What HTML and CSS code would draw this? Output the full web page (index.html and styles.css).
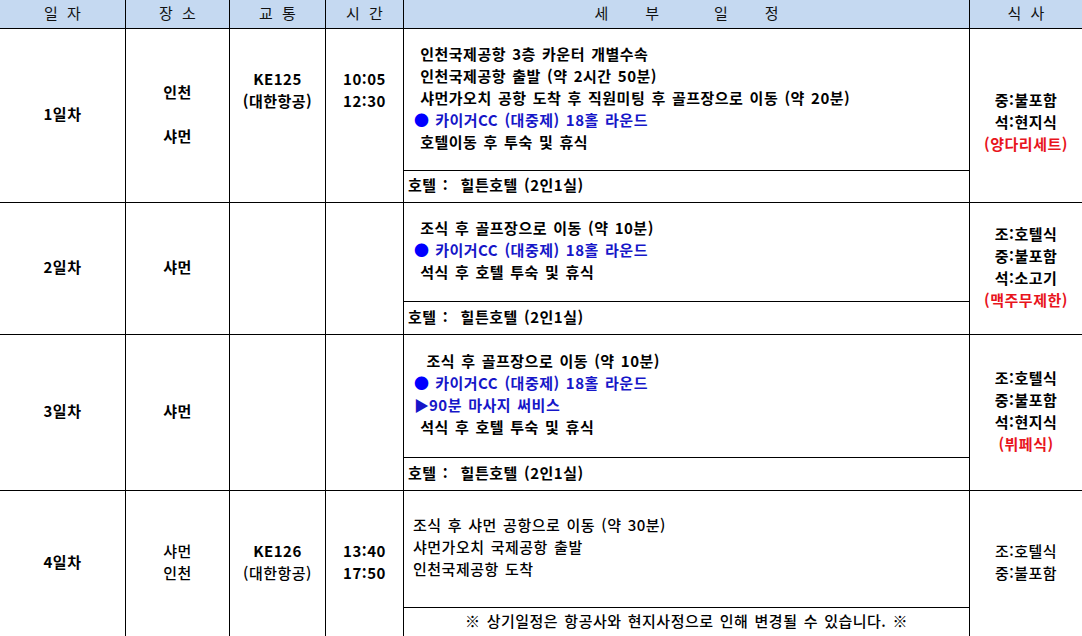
FILE: index.html
```html
<!DOCTYPE html>
<html lang="ko">
<head>
<meta charset="utf-8">
<title>일정표</title>
<link rel="stylesheet" href="styles.css">
</head>
<body>
<div class="sheet">
  <div class="cell hd">일 자</div>
  <div class="cell hd">장 소</div>
  <div class="cell hd">교 통</div>
  <div class="cell hd">시 간</div>
  <div class="cell hd hd-spread"><span>세</span><span class="g1">부</span><span class="g2">일</span><span class="g1">정</span></div>
  <div class="cell hd last">식 사</div>

  <!-- 1일차 -->
  <div class="cell b">1일차</div>
  <div class="cell b"><div>인천</div><div>&nbsp;</div><div>샤먼</div></div>
  <div class="cell b top"><div>KE125</div><div>(대한항공)</div></div>
  <div class="cell b top"><div>10:05</div><div>12:30</div></div>
  <div class="cell detail-cell">
    <div class="detail b">
      <div class="ln"> 인천국제공항 3층 카운터 개별수속</div>
      <div class="ln"> 인천국제공항 출발 (약 2시간 50분)</div>
      <div class="ln"> 샤먼가오치 공항 도착 후 직원미팅 후 골프장으로 이동 (약 20분)</div>
      <div class="ln blue"><span class="dot">●</span> 카이거CC (대중제) 18홀 라운드</div>
      <div class="ln"> 호텔이동 후 투숙 및 휴식</div>
    </div>
    <div class="hotel b r1">호텔 :  힐튼호텔 (2인1실)</div>
  </div>
  <div class="cell b last meal1"><div>중:불포함</div><div>석:현지식</div><div class="red">(양다리세트)</div></div>

  <!-- 2일차 -->
  <div class="cell b">2일차</div>
  <div class="cell b">샤먼</div>
  <div class="cell"></div>
  <div class="cell"></div>
  <div class="cell detail-cell">
    <div class="detail b">
      <div class="ln"> 조식 후 골프장으로 이동 (약 10분)</div>
      <div class="ln blue"><span class="dot">●</span> 카이거CC (대중제) 18홀 라운드</div>
      <div class="ln"> 석식 후 호텔 투숙 및 휴식</div>
    </div>
    <div class="hotel b">호텔 :  힐튼호텔 (2인1실)</div>
  </div>
  <div class="cell b last"><div>조:호텔식</div><div>중:불포함</div><div>석:소고기</div><div class="red">(맥주무제한)</div></div>

  <!-- 3일차 -->
  <div class="cell b">3일차</div>
  <div class="cell b">샤먼</div>
  <div class="cell"></div>
  <div class="cell"></div>
  <div class="cell detail-cell">
    <div class="detail b">
      <div class="ln">  조식 후 골프장으로 이동 (약 10분)</div>
      <div class="ln blue"><span class="dot">●</span> 카이거CC (대중제) 18홀 라운드</div>
      <div class="ln blue"><span class="tri">▶</span>90분 마사지 써비스</div>
      <div class="ln"> 석식 후 호텔 투숙 및 휴식</div>
    </div>
    <div class="hotel b">호텔 :  힐튼호텔 (2인1실)</div>
  </div>
  <div class="cell b last"><div>조:호텔식</div><div>중:불포함</div><div>석:현지식</div><div class="red">(뷔페식)</div></div>

  <!-- 4일차 -->
  <div class="cell b">4일차</div>
  <div class="cell m"><div>샤먼</div><div>인천</div></div>
  <div class="cell m"><div class="b">KE126</div><div>(대한항공)</div></div>
  <div class="cell b"><div>13:40</div><div>17:50</div></div>
  <div class="cell detail-cell">
    <div class="detail d4 m">
      <div class="ln">조식 후 샤먼 공항으로 이동 (약 30분)</div>
      <div class="ln">샤먼가오치 국제공항 출발</div>
      <div class="ln">인천국제공항 도착</div>
    </div>
    <div class="note m">※ 상기일정은 항공사와 현지사정으로 인해 변경될 수 있습니다. ※</div>
  </div>
  <div class="cell last m"><div>조:호텔식</div><div>중:불포함</div></div>
</div>
</body>
</html>
```

FILE: styles.css
```css
* { box-sizing: border-box; }

html, body {
  margin: 0;
  padding: 0;
  background: #fff;
  overflow: hidden;
}

body {
  width: 1082px;
  height: 636px;
  font-family: "Noto Sans CJK KR", "Noto Sans", sans-serif;
  font-size: 15px;
  line-height: 22px;
  letter-spacing: 0.5px;
  word-spacing: 1.5px;
  color: #000;
}

.sheet {
  display: grid;
  grid-template-columns: 126px 104px 96px 78px 566px 112px;
  grid-template-rows: 29px 174px 132px 156px 146px;
  width: 1082px;
}

.cell {
  display: flex;
  flex-direction: column;
  justify-content: center;
  align-items: center;
  text-align: center;
  padding-bottom: 4px;
  border-right: 1px solid #000;
  border-bottom: 1px solid #000;
  white-space: nowrap;
}

.cell.last { border-right: none; }

.hd {
  background: #c5d9f1;
  font-weight: 400;
  color: #111;
  line-height: 20px;
  letter-spacing: 0;
  word-spacing: 5px;
  padding-bottom: 2px;
}

.hd-spread {
  flex-direction: row;
}
.hd-spread .g1 { margin-left: 37px; }
.hd-spread .g2 { margin-left: 55px; }

.b { font-weight: 700; }
.m { font-weight: 500; }

.top {
  justify-content: flex-start;
  padding-top: 39px;
}

.meal1 {
  justify-content: flex-start;
  padding-top: 60px;
}

.red { color: #e8141c; }

.detail-cell {
  align-items: stretch;
  justify-content: flex-start;
  text-align: left;
  padding-bottom: 0;
}

.detail {
  flex: 1;
  display: flex;
  flex-direction: column;
  justify-content: center;
  padding-left: 10px;
  padding-bottom: 4px;
  border-bottom: 1px solid #000;
}

.detail.d4 { padding-left: 9px; }

.ln { white-space: pre; }

.blue { color: #1616c8; }
.dot { color: #0000ff; letter-spacing: 0; }
.tri { color: #1616c8; letter-spacing: 0; }

.hotel {
  height: 32px;
  display: flex;
  align-items: center;
  padding-left: 4px;
  padding-bottom: 3px;
  white-space: pre;
}
.hotel.r1 { height: 31px; }

.note {
  height: 28px;
  display: flex;
  align-items: center;
  justify-content: center;
  padding-bottom: 2px;
}
```
